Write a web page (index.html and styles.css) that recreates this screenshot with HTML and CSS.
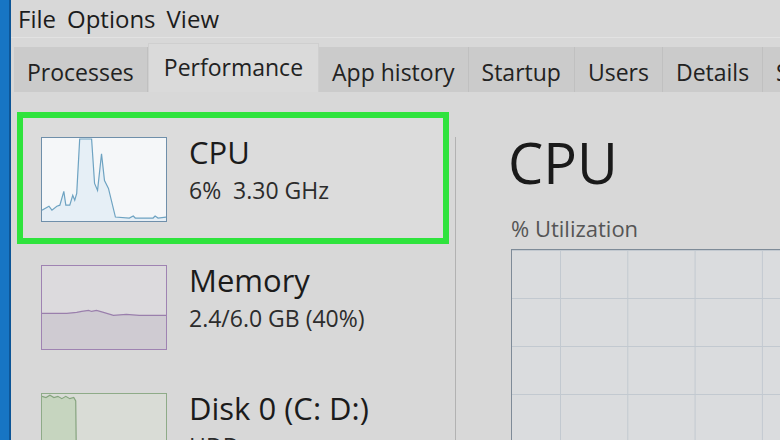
FILE: index.html
```html
<!DOCTYPE html>
<html lang="en">
<head>
  <meta charset="UTF-8">
  <title>Task Manager</title>
  <link rel="stylesheet" href="styles.css">
</head>
<body>
  <div class="screen">
    <div class="edge"></div>

    <div class="window">
      <div class="menu">
        <span>File</span>
        <span>Options</span>
        <span>View</span>
      </div>

      <div class="tabs">
        <div class="tab">Processes</div>
        <div class="tab active">Performance</div>
        <div class="tab">App history</div>
        <div class="tab">Startup</div>
        <div class="tab">Users</div>
        <div class="tab">Details</div>
        <div class="tab">Services</div>
      </div>

      <div class="perf">
        <div class="side">
          <div class="item selected">
            <svg class="spark spark-cpu" viewBox="0 0 125 84" preserveAspectRatio="none">
              <polygon class="fill" points="0,73 7,69 10,73 15,69 18,68 22,54 24,68 28,68 31,58 33,63 35,56 38,1 50,1 53,46 56,53 60,16 63,43 67,51 74,80 88,81 92,79 94,81 112,81 114,79 117,81 125,80 125,84 0,84"/>
              <polyline class="line" points="0,73 7,69 10,73 15,69 18,68 22,54 24,68 28,68 31,58 33,63 35,56 38,1 50,1 53,46 56,53 60,16 63,43 67,51 74,80 88,81 92,79 94,81 112,81 114,79 117,81 125,80"/>
            </svg>
            <div class="item-text">
              <div class="item-name">CPU</div>
              <div class="item-detail">6%&nbsp; 3.30 GHz</div>
            </div>
          </div>

          <div class="item">
            <svg class="spark spark-mem" viewBox="0 0 125 84" preserveAspectRatio="none">
              <polygon class="fill" points="0,48 25,48 35,47 40,46 47,45 50,46 55,45 62,47 72,50 85,49 98,50 125,50 125,84 0,84"/>
              <polyline class="line" points="0,48 25,48 35,47 40,46 47,45 50,46 55,45 62,47 72,50 85,49 98,50 125,50"/>
            </svg>
            <div class="item-text">
              <div class="item-name">Memory</div>
              <div class="item-detail">2.4/6.0 GB (40%)</div>
            </div>
          </div>

          <div class="item">
            <svg class="spark spark-disk" viewBox="0 0 125 84" preserveAspectRatio="none">
              <polygon class="fill" points="0,2 4,3 8,1 12,3 16,2 20,4 24,2 28,4 32,3 34,6 35,84 0,84"/>
              <polyline class="line" points="0,2 4,3 8,1 12,3 16,2 20,4 24,2 28,4 32,3 34,6 35,84"/>
              <polyline class="line" points="55,84 55,47 56,84"/>
            </svg>
            <div class="item-text">
              <div class="item-name">Disk 0 (C: D:)</div>
              <div class="item-detail">HDD</div>
            </div>
          </div>
        </div>

        <div class="detail">
          <div class="detail-title">CPU</div>
          <div class="graph-label">% Utilization</div>
          <div class="graph"></div>
        </div>
      </div>
    </div>
  </div>
</body>
</html>
```

FILE: styles.css
```css
body {
  margin: 0;
  background: #d8d8d8;
  font-family: 'Open Sans', 'Noto Sans', sans-serif;
  color: #1e1e1e;
}

.screen {
  display: flex;
  width: 780px;
  height: 440px;
  overflow: hidden;
}

.edge {
  flex: none;
  width: 9px;
  background: #1775c4;
  border-right: 2px solid #0d5596;
}

.window {
  flex: 1;
  min-width: 0;
  display: flex;
  flex-direction: column;
}

/* menu bar */
.menu {
  height: 37px;
  display: flex;
  align-items: center;
  gap: 11px;
  padding: 0 0 0 7px;
  font-size: 24px;
  color: #1c1c1c;
  border-bottom: 1px solid #e2e2e2;
}

/* tab strip */
.tabs {
  height: 49px;
  margin-top: 5px;
  display: flex;
  align-items: flex-end;
  padding-left: 3px;
  white-space: nowrap;
}
.tab {
  flex: none;
  height: 45px;
  line-height: 50px;
  padding: 0 13px;
  font-size: 23px;
  background: #cbcbcb;
  border-right: 1px solid #c0c0c0;
  color: #222;
  overflow: hidden;
}
.tab.active {
  height: 49px;
  box-sizing: border-box;
  line-height: 47px;
  padding: 0 15px;
  background: #dadada;
  border: 1px solid #cfcfcf;
  border-bottom: none;
}

/* performance page */
.perf {
  flex: 1;
  display: flex;
  min-height: 0;
}

.side {
  flex: none;
  width: 420px;
  padding: 26px 12px 0 12px;
  display: flex;
  flex-direction: column;
  gap: 8px;
}

.item {
  flex: none;
  height: 120px;
  box-sizing: border-box;
  padding: 19px 18px 16px 18px;
  display: flex;
  gap: 22px;
}
.item.selected {
  background: #dcdcdc;
  outline: 6px solid #2fe33d;
}

.spark {
  flex: none;
  width: 126px;
  height: 85px;
  box-sizing: border-box;
  border: 1px solid;
}
.spark .line { fill: none; stroke-width: 1.2; vector-effect: non-scaling-stroke; }

.spark-cpu { border-color: #6f8faa; background: #f5f7f9; }
.spark-cpu .fill { fill: #e6eff6; }
.spark-cpu .line { stroke: #6ea3c2; }

.spark-mem { border-color: #9f83b2; background: #dcdadd; }
.spark-mem .fill { fill: #cfcbd2; }
.spark-mem .line { stroke: #9a7fac; }

.spark-disk { border-color: #8eab88; background: #d9dcd6; height: 100px; }
.spark-disk .fill { fill: #c6d5bf; }
.spark-disk .line { stroke: #86a47f; }

.item-name {
  font-size: 31px;
  line-height: 30px;
  color: #1b1b1b;
}
.item-detail {
  margin-top: 8px;
  font-size: 23px;
  line-height: 30px;
  color: #2c2c2c;
}

.detail {
  flex: 1;
  margin-top: 45px;
  border-left: 1px solid #b2b2b2;
  padding-left: 52px;
  min-width: 0;
}
.detail-title {
  font-size: 56px;
  line-height: 50px;
  color: #1a1a1a;
}
.graph-label {
  margin-top: 26px;
  font-size: 22px;
  line-height: 30px;
  color: #555;
  padding-left: 3px;
}
.graph {
  margin: 6px 0 0 3px;
  height: 300px;
  border: 1px solid #7e8b98;
  border-right: none;
  background-color: #dadcde;
  background-image:
    linear-gradient(to right, #c2c9d0 1px, transparent 1px),
    linear-gradient(to bottom, #c2c9d0 1px, transparent 1px);
  background-size: 67.3px 48px;
  background-position: 48px 48px;
}
```
